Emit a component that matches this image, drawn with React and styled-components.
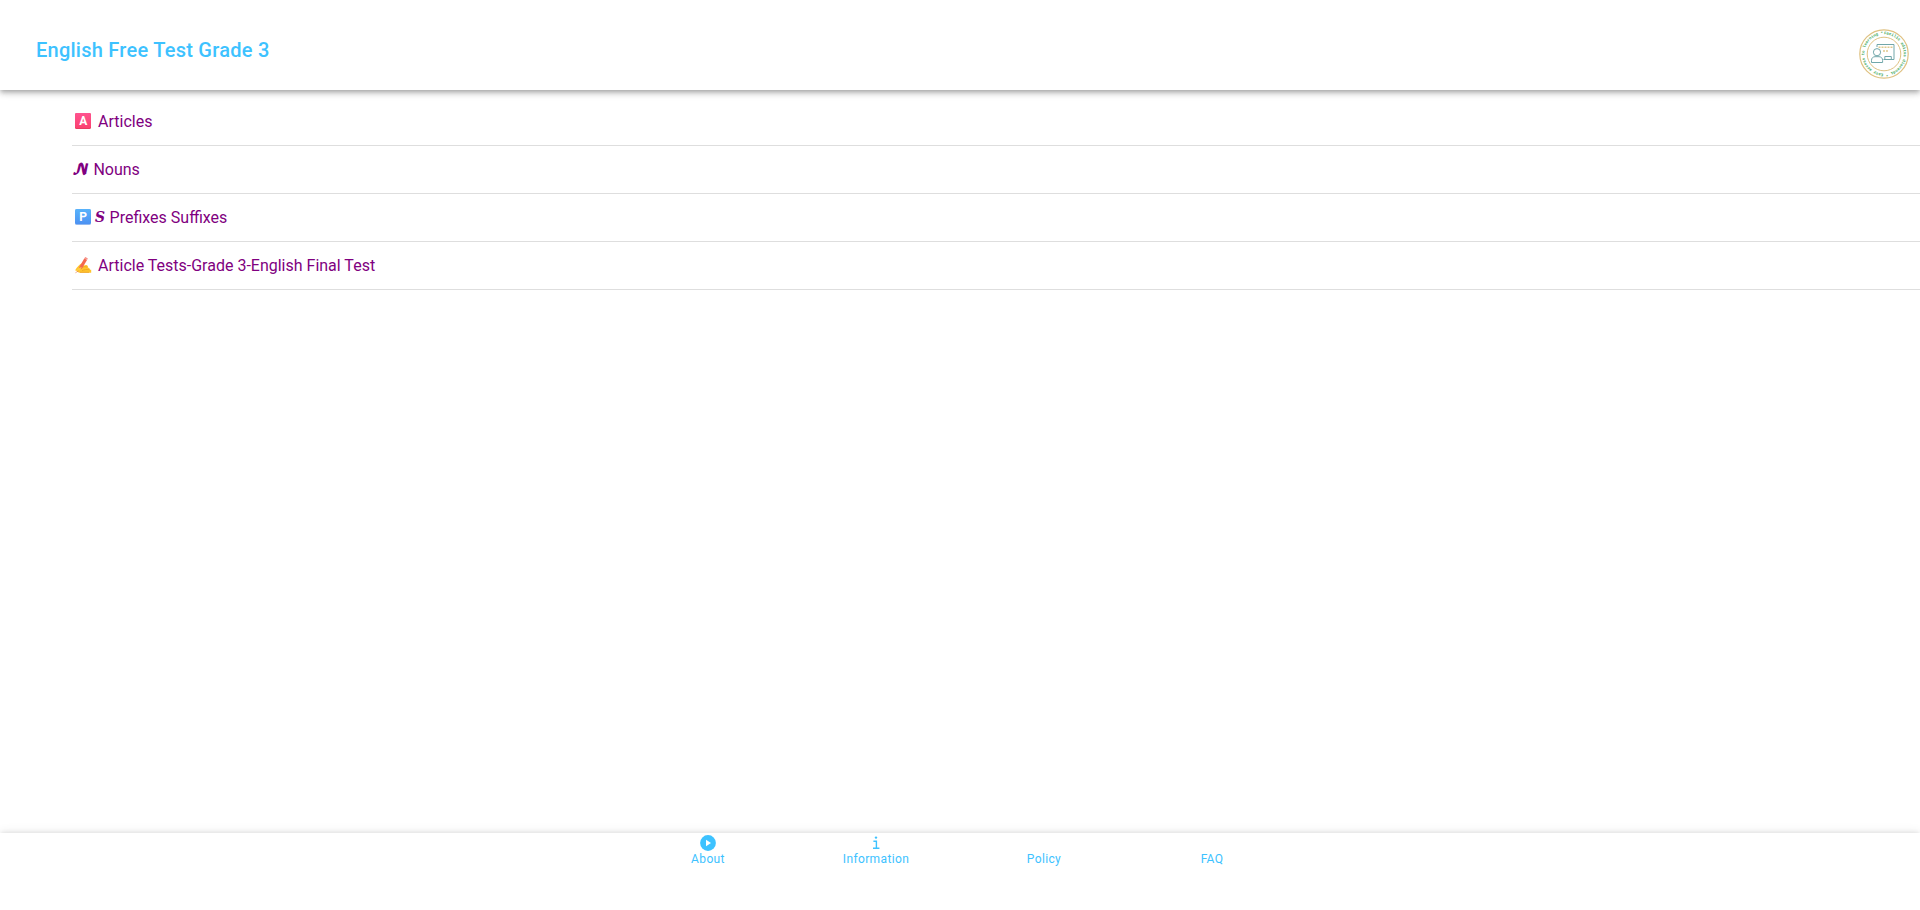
import React from 'react';
import styled, { createGlobalStyle } from 'styled-components';

const LetterBadge = ({ letter, from, to, edge }) => (
  <BadgeIcon viewBox="0 0 22 18" aria-hidden="true">
    <defs>
      <linearGradient id={`badge-${letter}`} x2="0" y2="1">
        <stop offset="0" stopColor={from} />
        <stop offset="1" stopColor={to} />
      </linearGradient>
    </defs>
    <rect x="3" y="0" width="16" height="16" rx="1.6" fill={edge} />
    <rect x="3" y="0" width="16" height="15.2" rx="1.6" fill={`url(#badge-${letter})`} />
    <BadgeLetter x="11.2" y="12.4">{letter}</BadgeLetter>
  </BadgeIcon>
);

const WritingHand = () => (
  <BadgeIcon viewBox="0 1 22 18" aria-hidden="true">
    <path
      d="M3 14.4C5 11 7.5 8 10 7.2c1.6-.5 2.7.2 2.2 1.3l-1 1.6c1.6-1 3.6-1.4 4.4-.4.5.7.4 1.3 0 1.7 1.5.2 2.5 1.3 2.2 2.4h1.4v3H9.5c-3 0-4.5-.8-5.2-2.3z"
      fill="#ffc52e"
    />
    <path d="M8.5 12.5c2.3-1.8 4.5-2.3 7-1.3M10 14.6c2.3-1 5-1.4 7.7-.7M8 16.3h9" fill="none" stroke="#e99a20" strokeWidth="0.7" />
    <path d="M12.4 2.2l2.6 1.7-5 8.6-3.3 2 .6-3.6z" fill="#f4684f" />
    <path d="M12.4 2.2l.9-1.3 2.6 1.7-.9 1.3z" fill="#f7928a" />
    <path d="M4.5 14.3c1.6-1.6 3-2.8 5.2-3.2l-1.2 2.6-2.6 2z" fill="#ffce3d" />
    <path d="M3.4 16.8l3.2-2" stroke="#e27545" strokeWidth="0.6" />
  </BadgeIcon>
);

const topics = [
  {
    id: 'articles',
    mark: <LetterBadge letter="A" from="#ff5390" to="#fb416f" edge="#e23b5c" />,
    label: 'Articles',
  },
  { id: 'nouns', mark: '𝓝', label: 'Nouns' },
  {
    id: 'prefixes-suffixes',
    mark: (
      <>
        <LetterBadge letter="P" from="#58b3fb" to="#4c91f2" edge="#a9c6ef" />
        𝑺
      </>
    ),
    label: 'Prefixes Suffixes',
  },
  {
    id: 'final-test',
    mark: <WritingHand />,
    label: 'Article Tests-Grade 3-English Final Test',
  },
];

const PlayIcon = () => (
  <svg viewBox="0 0 16 16" aria-hidden="true">
    <circle cx="8" cy="8" r="7.9" fill="currentColor" />
    <path d="M6 4.8v6.4L11 8z" fill="#fff" />
  </svg>
);

const InfoIcon = () => (
  <svg viewBox="0 0 16 16" aria-hidden="true">
    <circle cx="8" cy="2.6" r="1.2" fill="currentColor" />
    <path d="M5.4 6.2h3v7M5 13.3h6.4" fill="none" stroke="currentColor" strokeWidth="1.4" />
  </svg>
);

const tabs = [
  { id: 'about', label: 'About', icon: <PlayIcon /> },
  { id: 'information', label: 'Information', icon: <InfoIcon /> },
  { id: 'policy', label: 'Policy' },
  { id: 'faq', label: 'FAQ' },
];

const Logo = () => (
  <LogoImage viewBox="0 0 50 50" role="img" aria-label="Facilis aditus discendi">
    <defs>
      <path id="ring" d="M25 5.2a19.8 19.8 0 0 1 0 39.6a19.8 19.8 0 0 1 0 -39.6" />
    </defs>
    <g fill="none" stroke="#dfc181">
      <circle cx="25" cy="25" r="24.2" strokeWidth="1.2" />
      <circle cx="25" cy="25" r="16.8" />
    </g>
    <LogoText>
      <textPath href="#ring">Facilis aditus discendi * Easy access to learning *</textPath>
    </LogoText>
    <g fill="none" stroke="#71a7aa">
      <path d="M18 18v-2.5h17v15H24.5M25.8 30.5v-3h6.5v3" />
      <circle cx="18" cy="23.2" r="3.6" />
      <path d="M12.5 33.5v-2.2c0-2.3 1.6-3.6 3.5-3.6h4c2 0 3.6 1.3 3.6 3.6v2.2z" />
    </g>
    <path d="M19.5 18.2h14M24 22h6" stroke="#dfc98d" strokeWidth="1.5" strokeDasharray="2 1" />
  </LogoImage>
);

const App = () => {
  return (
    <Page>
      <GlobalStyle />
      <Header>
        <Title>English Free Test Grade 3</Title>
        <Logo />
      </Header>
      <TopicList>
        {topics.map((topic) => (
          <TopicItem key={topic.id}>
            <TopicLink href={`#${topic.id}`}>
              <TopicMark>{topic.mark}</TopicMark>
              {topic.label}
            </TopicLink>
          </TopicItem>
        ))}
      </TopicList>
      <TabBar>
        {tabs.map((tab) => (
          <TabLink key={tab.id} href={`#${tab.id}`}>
            <TabIcon>{tab.icon}</TabIcon>
            <span>{tab.label}</span>
          </TabLink>
        ))}
      </TabBar>
    </Page>
  );
};

const GlobalStyle = createGlobalStyle`
  * {
    box-sizing: border-box;
  }

  body {
    margin: 0;
    background: #fff;
    font-family: Roboto, sans-serif;
    font-size: 16px;
  }
`;

const Page = styled.div`
  display: flex;
  flex-direction: column;
  min-height: 100vh;
`;

const Header = styled.header`
  display: flex;
  align-items: center;
  justify-content: space-between;
  padding: 29px 11px 11px 36px;
  box-shadow: 0 2px 4px -1px rgba(0, 0, 0, 0.2), 0 4px 5px 0 rgba(0, 0, 0, 0.14),
    0 1px 10px 0 rgba(0, 0, 0, 0.12);
`;

const Title = styled.h1`
  margin: 0;
  padding-bottom: 8px;
  color: #3dc2ff;
  font-size: 20px;
  font-weight: 500;
  line-height: 24px;
  letter-spacing: 0.0125em;
`;

const LogoImage = styled.svg`
  width: 50px;
  height: 50px;
`;

const LogoText = styled.text`
  fill: #3ba757;
  font-family: 'Liberation Mono', monospace;
  font-size: 4px;
  font-weight: 700;
`;

const TopicList = styled.ul`
  flex: 1;
  margin: 8px 0 0;
  padding: 0 0 0 72px;
  list-style: none;
`;

const TopicItem = styled.li`
  display: flex;
  align-items: center;
  height: 48px;
  border-bottom: 1px solid #dedede;
`;

const TopicLink = styled.a`
  display: flex;
  align-items: center;
  gap: 4px;
  color: purple;
  line-height: 24px;
  text-decoration: none;
`;

const TopicMark = styled.span`
  display: flex;
  align-items: center;
  height: 24px;
  font-family: 'DejaVu Math TeX Gyre', serif;
  font-size: 14px;
`;

const BadgeIcon = styled.svg`
  width: 22px;
  height: 18px;
`;

const BadgeLetter = styled.text`
  fill: #fff;
  font-family: Roboto, sans-serif;
  font-size: 12px;
  font-weight: 700;
  text-anchor: middle;
`;

const TabBar = styled.nav`
  display: flex;
  justify-content: center;
  padding-bottom: 43px;
  background: #fff;
  box-shadow: 0 -2px 4px -1px rgba(0, 0, 0, 0.08), 0 -1px 10px 0 rgba(0, 0, 0, 0.08);
`;

const TabLink = styled.a`
  display: flex;
  flex: 1;
  flex-direction: column;
  align-items: center;
  max-width: 168px;
  padding-top: 2px;
  color: #3dc2ff;
  font-size: 12px;
  line-height: 16px;
  letter-spacing: 0.03em;
  text-decoration: none;
`;

const TabIcon = styled.span`
  display: flex;
  width: 16px;
  height: 16px;

  svg {
    width: 100%;
  }
`;

export default App;
